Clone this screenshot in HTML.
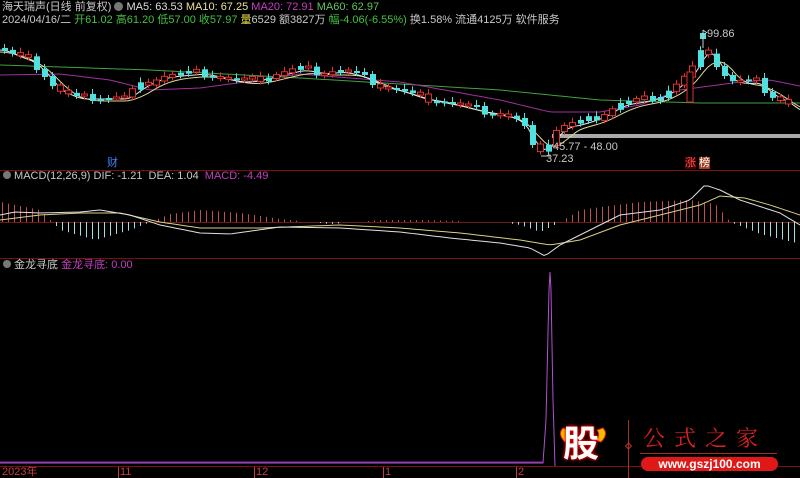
<!DOCTYPE html>
<html><head><meta charset="utf-8"><style>
html,body{margin:0;padding:0;background:#000;width:800px;height:478px;overflow:hidden}
body{position:relative;font-family:"Liberation Sans","Noto Sans CJK SC",sans-serif;font-size:11px}
.t{position:absolute;white-space:nowrap;line-height:12px}
svg{position:absolute;left:0;top:0}
</style></head><body>
<svg id="s" width="800" height="478" viewBox="0 0 800 478"></svg>
<div class="t" style="left:2px;top:1px;color:#c8c8c8">海天瑞声(日线 前复权) <span style="display:inline-block;width:9px;height:9px;border-radius:50%;background:#777;vertical-align:-1px"></span> <span style="color:#ddd">MA5: 63.53</span> <span style="color:#e8e0a0">MA10: 67.25</span> <span style="color:#c040c0">MA20: 72.91</span> <span style="color:#60c060">MA60: 62.97</span></div>
<div class="t" style="left:2px;top:14px;color:#c8c8c8">2024/04/16/二 <span style="color:#40c040">开61.02 高61.20 低57.00 收57.97</span> <span style="color:#e0e040">量</span>6529 额3827万 <span style="color:#40c040">幅-4.06(-6.55%)</span> 换1.58% 流通4125万 软件服务</div>
<div class="t" style="left:707px;top:28px;color:#c8c8c8">99.86</div>
<div class="t" style="left:553px;top:141px;color:#c8c8c8">45.77 - 48.00</div>
<div class="t" style="left:546px;top:153px;color:#c8c8c8">37.23</div>
<div class="t" style="left:107px;top:157px;color:#4080ff">财</div>
<div class="t" style="left:685px;top:157px;color:#ff5050;background:#400">涨</div><div class="t" style="left:699px;top:157px;color:#fff;background:#a04020">榜</div>
<div class="t" style="left:3px;top:170px;color:#c8c8c8"><span style="display:inline-block;width:8px;height:8px;border-radius:50%;background:#777"></span> MACD(12,26,9) DIF: -1.21 &nbsp;DEA: 1.04 &nbsp;<span style="color:#c040c0">MACD: -4.49</span></div>
<div class="t" style="left:3px;top:259px;color:#c8c8c8"><span style="display:inline-block;width:8px;height:8px;border-radius:50%;background:#777"></span> 金龙寻底 <span style="color:#c040c0">金龙寻底: 0.00</span></div>
<div class="t" style="left:2px;top:466px;color:#c04040">2023年</div>
<div class="t" style="left:120px;top:466px;color:#c04040">11</div>
<div class="t" style="left:256px;top:466px;color:#c04040">12</div>
<div class="t" style="left:385px;top:466px;color:#c04040">1</div>
<div class="t" style="left:518px;top:466px;color:#c04040">2</div>
<div class="t" style="left:563px;top:424px;font-size:36px;line-height:40px;font-weight:bold;color:#fff;text-shadow:0 0 3px #f00,0 0 3px #f00">股</div>
<div class="t" style="left:643px;top:425px;font-size:22px;line-height:26px;color:#e02020;font-family:'Noto Serif CJK SC',serif;letter-spacing:9px">公式之家</div>
<div style="position:absolute;left:640px;top:453px;width:137px;height:0;border-top:1px solid #a03020"></div>
<div class="t" style="left:641px;top:457px;width:137px;height:14px;border-radius:7px;background:#e01818;color:#fff;font-weight:bold;font-size:12px;line-height:14px;text-align:center">www.gszj100.com</div>
<script>
(function(){
var s=document.getElementById('s'),h='';
function L(x1,y1,x2,y2,c,w){h+='<line x1="'+x1+'" y1="'+y1+'" x2="'+x2+'" y2="'+y2+'" stroke="'+c+'" stroke-width="'+(w||1)+'"/>';}
function P(pts,c){h+='<polyline fill="none" stroke="'+c+'" stroke-width="1" points="'+pts.map(function(p){return p[0]+','+p[1]}).join(' ')+'"/>';}
function interp(k,x){if(x<=k[0][0])return k[0][1];for(var i=0;i<k.length-1;i++){if(x>=k[i][0]&&x<=k[i+1][0]){var t=(x-k[i][0])/(k[i+1][0]-k[i][0]);return k[i][1]+t*(k[i+1][1]-k[i][1]);}}return k[k.length-1][1];}
L(0,170.5,800,170.5,'#7a1010');L(0,258.5,800,258.5,'#7a1010');L(0,466.5,800,466.5,'#7a1010');
h+='<rect x="552" y="134" width="248" height="4" fill="#aaa"/>';
var pk=[[0,48],[15,55],[30,60],[45,75],[55,88],[75,97],[125,97],[135,88],[150,80],[165,75],[200,72],[215,75],[235,80],[250,80],[270,75],[300,68],[320,72],[340,70],[360,75],[380,85],[400,90],[420,97],[440,100],[460,105],[480,110],[500,113],[515,118],[525,128],[532,147],[545,148],[555,130],[565,125],[580,122],[600,115],[620,103],[640,100],[660,95],[675,85],[690,72],[697,58],[705,45],[712,58],[720,70],[730,80],[745,82],[755,80],[765,90],[775,97],[785,100],[795,110]];
var ma60=[[0,65],[150,70],[300,78],[400,84],[500,90],[600,100],[700,103],[800,103]];
var ma20=[[0,75],[60,74],[110,80],[150,90],[200,88],[260,80],[300,74],[400,82],[500,100],[550,112],[600,112],[640,105],[680,90],[740,82],[770,80],[800,86]];
var a=[],b=[],c=[],d=[];
for(var x=0;x<=800;x+=4){a.push([x,interp(ma60,x)]);b.push([x,interp(ma20,x)]);
var m5=0,m10=0;for(var j=0;j<5;j++)m5+=interp(pk,x-j*3);for(var j=0;j<10;j++)m10+=interp(pk,x-j*3);
c.push([x,m5/5+2]);d.push([x,m10/10+4]);}
P(a,'#40a040');P(b,'#a030a0');P(d,'#e0d890');P(c,'#e8e8e8');
var prev=interp(pk,0);
for(var x=4;x<796;x+=8){var y=interp(pk,x)+((x*13)%7-3);var up=((x*7)%5)<2?!(y<prev):(y<prev);var tp=Math.min(prev,y),bh=Math.max(2,Math.abs(y-prev)+1);var col=up?'#e03030':'#50e0e0';
L(x+0.5,tp-3-(x%3),x+0.5,tp+bh+3,col);
if(up)h+='<rect x="'+(x-2.5)+'" y="'+tp+'" width="6" height="'+bh+'" fill="#000" stroke="'+col+'"/>';else h+='<rect x="'+(x-2)+'" y="'+tp+'" width="6" height="'+bh+'" fill="'+col+'"/>';prev=y;}
h+='<rect x="687" y="72" width="6" height="30" fill="#000" stroke="#e03030"/><rect x="700" y="33" width="6" height="6" fill="#50e0e0"/>';L(703,30,703,48,'#ccc');L(703,30,707,33,'#ccc');L(541,156,550,156,'#ccc');
var z=222;L(0,z+.5,800,z+.5,'#701818');
var hk=[[0,-20],[40,-12],[60,8],[95,18],[130,8],[150,0],[170,-8],[200,-12],[240,-9],[280,-3],[330,2],[380,-2],[420,-2],[460,-1],[500,0],[520,3],[540,10],[560,0],[580,-12],[600,-15],[640,-20],[690,-22],[715,-18],[730,0],[760,12],[800,22]];
for(var x=2;x<800;x+=6){var v=interp(hk,x);if(Math.abs(v)<1)continue;L(x+.5,z,x+.5,z+v,v<0?'#c05050':'#a0e0e0');}
var dif=[[0,215],[15,212],[40,213],[80,212],[100,210],[130,215],[160,225],[200,233],[230,234],[280,227],[340,228],[400,232],[450,238],[500,243],[530,248],[545,256],[560,245],[580,235],[620,215],[660,210],[690,200],[705,185],[720,190],[740,200],[780,213],[800,225]];
var dea=[[0,220],[40,215],[80,213],[120,213],[160,222],[200,228],[260,228],[340,225],[400,228],[460,233],[520,240],[550,245],[580,240],[620,225],[660,215],[700,205],[720,196],[745,198],[770,205],[800,215]];
var e=[],f=[];for(var x=0;x<=800;x+=4){e.push([x,interp(dif,x)]);f.push([x,interp(dea,x)]);}
P(f,'#d8d080');P(e,'#e0e0e0');
P([[0,463],[543,463],[546,420],[549,290],[550,272],[551,290],[553,400],[555,466]],'#b050d0');
L(0,462,543,462,'#8030a0');
[118,254,383,516].forEach(function(x){L(x+.5,467,x+.5,478,'#c04040');});
h+='<path d="M563 428 q-6 6 2 14 l6 -2 q-6 -4 -2 -10z M603 428 q6 6 -2 14 l-6 -2 q6 -4 2 -10z" fill="#f0c000" stroke="#e02000"/>';
L(628.5,420,628.5,478,'#a03020');h+='<path d="M628.5 443 l3 3 l-3 3 l-3 -3z" fill="none" stroke="#c03020"/>';
s.innerHTML=h;
})();
</script>
</body></html>
